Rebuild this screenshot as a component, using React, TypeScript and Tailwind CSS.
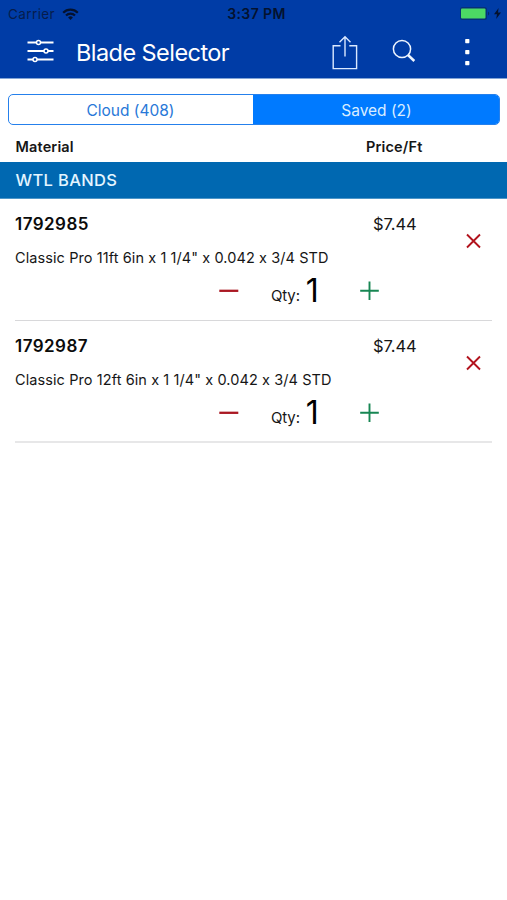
const items = [
  { id: '1792985', description: 'Classic Pro 11ft 6in x 1 1/4" x 0.042 x 3/4 STD', price: '$7.44', qty: 1 },
  { id: '1792987', description: 'Classic Pro 12ft 6in x 1 1/4" x 0.042 x 3/4 STD', price: '$7.44', qty: 1 },
];

function StatusBar() {
  return (
    <div className="grid h-[27px] grid-cols-3 items-center pl-2 pr-[6px] text-[13.5px] leading-none text-[#061c4c]">
      <div className="flex items-center gap-[7px]">
        <span className="pt-[2px] tracking-[0.4px]">Carrier</span>
        <svg width="17" height="12" viewBox="0 0 17 12" fill="none" stroke="#04122f" strokeWidth="2.2">
          <path d="M1.2 4.7a10.3 10.3 0 0 1 14.6 0" />
          <path d="M4 7.5a6.4 6.4 0 0 1 9 0" />
          <path d="M8.5 12 6.1 9.4a3.5 3.5 0 0 1 4.8 0Z" fill="#04122f" stroke="none" />
        </svg>
      </div>
      <div className="pl-[4px] text-center text-[14px] font-semibold tracking-[0.4px] text-[#04122f]">3:37 PM</div>
      <div className="flex items-center justify-end gap-[3px]">
        <svg width="31" height="13" viewBox="0 0 31 13">
          <rect x="0" y="0" width="27" height="13" rx="2.5" fill="#063078" />
          <rect x="1" y="1.5" width="24.5" height="10" rx="1" fill="#4cd964" />
          <path d="M28 4.5q2.5 2 0 4Z" fill="#062765" />
        </svg>
        <svg width="7" height="11" viewBox="0 0 7 11" fill="#04122f">
          <path d="M4.6 0 0 6.2h3L2.2 11 7 4.6H4Z" />
        </svg>
      </div>
    </div>
  );
}

function NavBar() {
  return (
    <div className="flex h-[50px] items-center pl-[27px] pr-[36px]">
      <svg className="-mt-[2px] shrink-0" width="27" height="24" viewBox="0 0 27 24" fill="none" stroke="#fff">
        <path d="M0.5 3.5h26M0.5 12h26M0.5 20.5h26" strokeWidth="2" />
        <g fill="#003ca6" strokeWidth="1.5">
          <circle cx="11.5" cy="3.5" r="2" />
          <circle cx="19" cy="12" r="2" />
          <circle cx="8" cy="20.5" r="2" />
        </g>
      </svg>
      <h1 className="ml-[22px] w-[255px] whitespace-nowrap pt-px text-[23.5px] leading-none tracking-[-0.56px] text-white">Blade Selector</h1>
      <svg className="shrink-0" width="27" height="35" viewBox="0 0 27 35" fill="none" stroke="#dbe9ff" strokeWidth="1.4">
        <path d="M9.5 10.8h-7.3v22.8h23.4V10.8h-7.3M14 21.5V2M8.5 7.2 14 1.7l5.5 5.5" />
      </svg>
      <svg className="-mt-[2px] ml-[34px] shrink-0" width="24" height="24" viewBox="0 0 24 24" fill="none" stroke="#eef5ff">
        <circle cx="10" cy="10" r="8.6" strokeWidth="1.5" />
        <path d="m16 16 6.3 6" strokeWidth="2.5" />
      </svg>
      <svg className="ml-auto shrink-0" width="8" height="28" viewBox="0 0 8 28" fill="#fff">
        <rect x="2.2" y="1" width="4.2" height="4.2" rx="0.7" />
        <rect x="2.2" y="12" width="4.2" height="4.2" rx="0.7" />
        <rect x="2.2" y="23" width="4.2" height="4.2" rx="0.7" />
      </svg>
    </div>
  );
}

function Item({ item }: { item: (typeof items)[number] }) {
  return (
    <li className="mx-[15px] flex h-[122px] flex-col border-b-2 border-[#e7e7e8] pt-[13px] text-[#161616] first:border-b first:border-[#d8d8da]">
      <div className="flex h-6 items-center text-[17px] leading-none">
        <span className="w-[358px] font-semibold tracking-[0.45px] text-[#0b0b0b]">{item.id}</span>
        <span className="text-[16.5px] tracking-[-0.05px]">{item.price}</span>
      </div>
      <div className="flex h-[22px] items-center">
        <p className="whitespace-nowrap pt-[23px] text-[14.5px] leading-none tracking-[0.09px]">{item.description}</p>
        <button aria-label="Remove" className="-mt-[13px] ml-auto mr-[10px]">
          <svg width="17" height="16" viewBox="0 0 17 16" stroke="#b2131d" strokeWidth="1.9">
            <path d="m2 1.5 13 13M15 1.5l-13 13" />
          </svg>
        </button>
      </div>
      <div className="mt-[16px] flex h-[34px] items-center pl-[204px]">
        <button aria-label="Decrease quantity">
          <svg width="20" height="20" viewBox="0 0 20 20" stroke="#aa1822" strokeWidth="2.3">
            <path d="M0.3 9.8h19" />
          </svg>
        </button>
        <div className="ml-[32px] flex w-[89px] items-baseline leading-none">
          <span className="text-[15px] leading-none tracking-[-0.15px] [transform:translateY(-1.5px)]">Qty:</span>
          <span className="ml-[6px] text-[32px] leading-none text-black">{item.qty}</span>
        </div>
        <button aria-label="Increase quantity">
          <svg width="20" height="20" viewBox="0 0 20 20" stroke="#178653" strokeWidth="1.9">
            <path d="M0.2 9.8h18.6M9.5 0.5v18.6" />
          </svg>
        </button>
      </div>
    </li>
  );
}

export default function App() {
  return (
    <div className="min-h-[900px] w-[507px] bg-white font-['Inter','Liberation_Sans',sans-serif] [font-feature-settings:'calt'_0]">
      <header className="h-[79px] border-b border-[#83a5d6] bg-[#003ca6]">
        <StatusBar />
        <NavBar />
      </header>
      <div className="ml-2 mr-[7px] mt-[15px] grid h-[31px] grid-cols-[244px_1fr] overflow-hidden rounded-[5px] border border-[#2580ec] text-[15.5px] leading-none">
        <button className="pr-px pt-[2px] text-[#2878d8]">Cloud (408)</button>
        <button className="bg-[#007aff] pl-px pt-[2px] text-[#d9edff]">Saved (2)</button>
      </div>
      <div className="flex h-[37px] items-center pl-[15.5px] pt-[7px] text-[14.5px] font-semibold leading-none tracking-[0.15px] text-[#161616]">
        <span className="w-[350.5px]">Material</span>
        <span>Price/Ft</span>
      </div>
      <h2 className="flex h-[37px] items-center border-b border-[#4d96c8] bg-[#0068b1] pl-[15.5px] pt-px text-[16.5px] font-medium leading-none tracking-[0.35px] text-[#e4f5ff]">WTL BANDS</h2>
      <ul>
        {items.map((item) => (
          <Item key={item.id} item={item} />
        ))}
      </ul>
    </div>
  );
}
